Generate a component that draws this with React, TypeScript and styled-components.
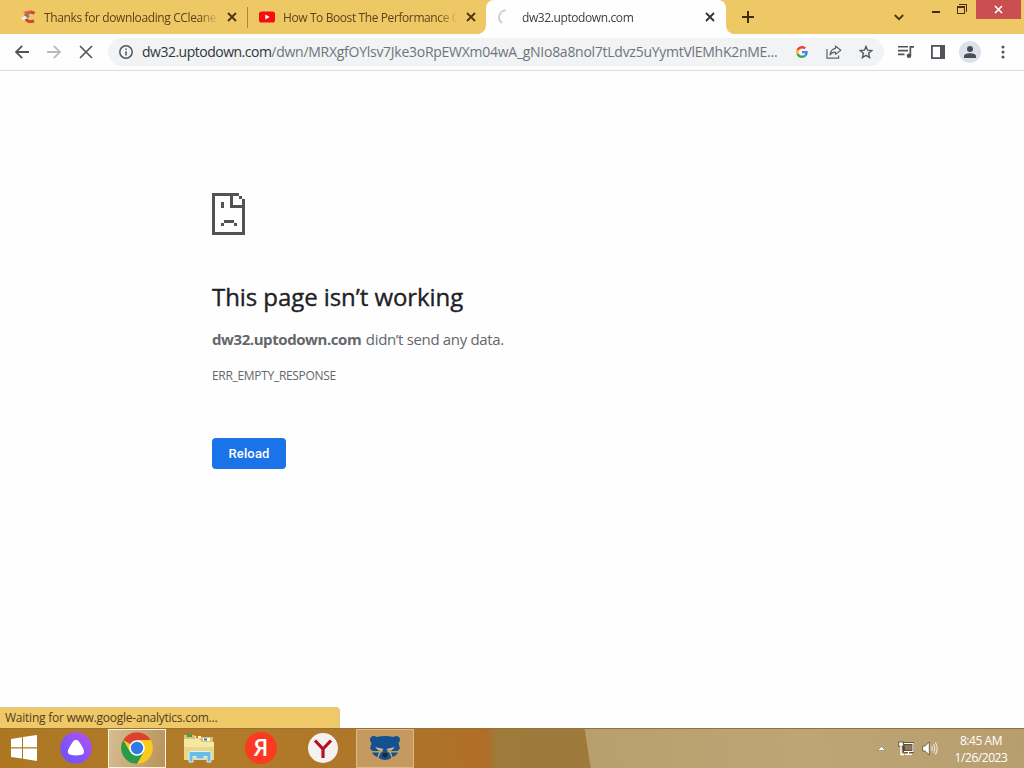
import React from "react";
import styled, { createGlobalStyle, css } from "styled-components";

const tabs = [
    { title: "Thanks for downloading CCleane", icon: "ccleaner", spacing: -0.38 },
    { title: "How To Boost The Performance C", icon: "youtube", spacing: -0.4 },
    { title: "dw32.uptodown.com", icon: "spinner", spacing: -0.4, active: true }
];

function TabIcon({ name }: { name: string }) {
    if (name === "ccleaner") {
        return (
            <svg width="16" height="16" viewBox="0 0 16 16">
                <path d="M14.5 4.5 C11.5 2 6.5 3 5.5 7.5 C5 11.5 9 13.5 14 12" fill="none" stroke="#cf4a2c" strokeWidth="3" />
                <path d="M3 3 L9 1.5 L11 3 L6 5.5 Z" fill="#e2673c" />
                <path d="M5 7 L8 4.5 L9.5 7.5 L7 9.5 Z" fill="#5f7fae" />
                <path d="M0.5 9.5 L5 6.5 L7.5 9 L3.5 11.5 Z" fill="#f6e8dc" />
            </svg>
        );
    }
    if (name === "youtube") {
        return (
            <svg width="16" height="16" viewBox="0 0 16 16">
                <rect x="0" y="2.5" width="16" height="11" rx="2.6" fill="#f80d0d" />
                <path d="M6.3 5.6 L10.7 8 L6.3 10.4 Z" fill="#fff" />
            </svg>
        );
    }
    return (
        <svg width="16" height="16" viewBox="0 0 16 16">
            <path d="M8 1.3 A7 7 0 0 0 4 14" fill="none" stroke="#c9cde2" strokeWidth="1.8" />
        </svg>
    );
}

function Cross({ size, color, weight }: { size: number; color: string; weight: number }) {
    return (
        <svg width={size} height={size} viewBox={`0 0 ${size} ${size}`}>
            <path d={`M1 1 L${size - 1} ${size - 1} M${size - 1} 1 L1 ${size - 1}`} stroke={color} strokeWidth={weight} />
        </svg>
    );
}

function SadFile() {
    return (
        <svg width="33" height="42" viewBox="0 0 33 42" shapeRendering="crispEdges" fill="#535353">
            <path d="M0 0 H27 V3 H21 V12 H33 V42 H0 Z M3 3 V39 H30 V15 H18 V3 Z" fillRule="evenodd" />
            <path d="M27 3 H30 V6 H27 Z M30 6 H33 V12 H30 Z" />
            <path d="M9 9 H12 V15 H9 Z M12 27 H22 V30 H12 Z M9 30 H12 V33 H9 Z M22 30 H25 V33 H22 Z" />
        </svg>
    );
}

function GoogleIcon() {
    return (
        <svg width="12" height="12" viewBox="0 0 48 48">
            <path fill="#EA4335" d="M24 9.5c3.54 0 6.71 1.22 9.21 3.6l6.85-6.85C35.9 2.38 30.47 0 24 0 14.62 0 6.51 5.38 2.56 13.22l7.98 6.19C12.43 13.72 17.74 9.5 24 9.5z" />
            <path fill="#4285F4" d="M46.98 24.55c0-1.57-.15-3.09-.38-4.55H24v9.02h12.94c-.58 2.96-2.26 5.48-4.78 7.18l7.73 6c4.51-4.18 7.09-10.36 7.09-17.65z" />
            <path fill="#FBBC05" d="M10.53 28.59c-.48-1.45-.76-2.99-.76-4.59s.27-3.14.76-4.59l-7.98-6.19C.92 16.46 0 20.12 0 24c0 3.88.92 7.54 2.56 10.78l7.97-6.19z" />
            <path fill="#34A853" d="M24 48c6.48 0 11.93-2.13 15.89-5.81l-7.73-6c-2.15 1.45-4.92 2.3-8.16 2.3-6.26 0-11.57-4.22-13.47-9.91l-7.98 6.19C6.51 42.62 14.62 48 24 48z" />
        </svg>
    );
}

function App() {
    return (
        <Screen>
            <GlobalStyle />
            <TabStrip>
                {tabs.map((tab) => (
                    <Tab key={tab.title} $active={tab.active}>
                        <TabIcon name={tab.icon} />
                        <TabTitle $spacing={tab.spacing} $active={tab.active}>{tab.title}</TabTitle>
                        <Cross size={10} color={tab.active ? "#333" : "#4d3317"} weight={1.8} />
                    </Tab>
                ))}
                <NewTab>
                    <svg width="12" height="12" viewBox="0 0 12 12">
                        <path d="M6 0 V12 M0 6 H12" stroke="#3d2c12" strokeWidth="2" />
                    </svg>
                </NewTab>
                <TabSearch>
                    <svg width="10" height="7" viewBox="0 0 10 7">
                        <path d="M0.8 1 L5 5.2 L9.2 1" fill="none" stroke="#4a3312" strokeWidth="1.8" />
                    </svg>
                </TabSearch>
                <WindowButtons>
                    <svg width="8" height="20" viewBox="0 0 8 20">
                        <rect y="11" width="8" height="2" fill="#4a2a17" />
                    </svg>
                    <svg width="10" height="20" viewBox="0 0 10 20" shapeRendering="crispEdges" fill="#4a2f14">
                        <path d="M0 6 H8 V14 H0 Z M1 8 V13 H7 V8 Z" fillRule="evenodd" />
                        <path d="M2 4 H10 V12 H9 V5 H2 Z" />
                    </svg>
                    <CloseWindow>
                        <Cross size={9} color="#fff" weight={1.7} />
                    </CloseWindow>
                </WindowButtons>
            </TabStrip>

            <Toolbar>
                <NavButtons>
                    <svg width="14" height="14" viewBox="0 0 14 14" fill="none" stroke="#505357" strokeWidth="1.8">
                        <path d="M14 7 H1.2 M7.2 0.8 L1 7 L7.2 13.2" />
                    </svg>
                    <svg width="14" height="14" viewBox="0 0 14 14" fill="none" stroke="#b9babc" strokeWidth="1.8">
                        <path d="M0 7 H12.8 M6.8 0.8 L13 7 L6.8 13.2" />
                    </svg>
                    <Cross size={14} color="#505357" weight={1.6} />
                </NavButtons>
                <AddressBar>
                    <svg width="14" height="14" viewBox="0 0 14 14">
                        <circle cx="7" cy="7" r="6.2" fill="none" stroke="#55585c" strokeWidth="1.5" />
                        <path d="M7 6.2 V10.5 M7 3.4 V5" stroke="#55585c" strokeWidth="1.5" />
                    </svg>
                    <Url>
                        <Domain>dw32.uptodown.com</Domain>
                        <UrlPath>/dwn/MRXgfOYlsv7Jke3oRpEWXm04wA_gNIo8a8nol7tLdvz5uYymtVlEMhK2nME...</UrlPath>
                    </Url>
                    <GoogleIcon />
                    <svg width="16" height="14" viewBox="0 0 16 14" fill="none" stroke="#5f6368" strokeWidth="1.2">
                        <path d="M1 4 V13.2 H12.6 V10.5" />
                        <path d="M9.5 1 L14.8 5.2 L9.5 9.4 V7.2 C6.8 7.1 5.2 8 4 10 C4.4 6.5 6.2 3.9 9.5 3.4 Z" strokeLinejoin="round" />
                    </svg>
                    <svg width="14" height="14" viewBox="0 0 14 14" fill="none" stroke="#55585c" strokeWidth="1.4">
                        <path d="M7 1.4 L8.6 5.2 L12.8 5.6 L9.6 8.3 L10.6 12.5 L7 10.3 L3.4 12.5 L4.4 8.3 L1.2 5.6 L5.4 5.2 Z" />
                    </svg>
                </AddressBar>
                <ToolbarIcons>
                    <svg width="16" height="14" viewBox="0 0 16 14" fill="#505357">
                        <path d="M0 1 H10 V2.6 H0 Z M0 4.8 H10 V6.4 H0 Z M0 8.6 H6.5 V10.2 H0 Z" />
                        <path d="M11.5 1 H16 V2.8 H13.2 V10.5 H11.5 Z" />
                        <circle cx="11" cy="10.8" r="2.3" />
                    </svg>
                    <svg width="14" height="14" viewBox="0 0 14 14">
                        <rect x="0.9" y="0.9" width="12.2" height="12.2" fill="none" stroke="#505357" strokeWidth="1.8" />
                        <rect x="9" y="1" width="4" height="12" fill="#505357" />
                    </svg>
                    <Avatar>
                        <svg width="12" height="12" viewBox="0 0 12 12" fill="#484e58">
                            <circle cx="6" cy="3" r="3" />
                            <path d="M0 12 V10.2 C0 8 3.5 7.2 6 7.2 S12 8 12 10.2 V12 Z" />
                        </svg>
                    </Avatar>
                    <svg width="4" height="14" viewBox="0 0 4 14" fill="#505357">
                        <circle cx="2" cy="2" r="1.5" />
                        <circle cx="2" cy="7" r="1.5" />
                        <circle cx="2" cy="12" r="1.5" />
                    </svg>
                </ToolbarIcons>
            </Toolbar>

            <ErrorPage>
                <SadFile />
                <Heading>This page isn’t working</Heading>
                <Message>
                    <strong>dw32.uptodown.com</strong> <span>didn’t send any data.</span>
                </Message>
                <ErrorCode>ERR_EMPTY_RESPONSE</ErrorCode>
                <ReloadButton>Reload</ReloadButton>
            </ErrorPage>

            <StatusBubble>Waiting for www.google-analytics.com...</StatusBubble>

            <Taskbar>
                <TaskItem $width={48}>
                    <svg width="26" height="26" viewBox="0 0 26 26" fill="#fff">
                        <path d="M0 4 L11 2.3 V12.3 H0 Z M12 2.1 L26 0 V12.3 H12 Z M0 13.4 H11 V23.5 L0 22 Z M12 13.4 H26 V26 L12 23.8 Z" />
                    </svg>
                </TaskItem>
                <TaskItem $width={56}>
                    <svg width="32" height="32" viewBox="0 0 32 32">
                        <defs>
                            <linearGradient id="alice" x1="1" y1="0" x2="0" y2="1">
                                <stop offset="0" stopColor="#b451f4" />
                                <stop offset="1" stopColor="#6454fb" />
                            </linearGradient>
                        </defs>
                        <circle cx="16" cy="16" r="15.8" fill="url(#alice)" />
                        <path d="M16 8 C18.5 8 19.5 10 21.5 13.5 C23.5 17 25 19.5 23.5 21.5 C22.3 23.2 19.5 23.4 16 23.4 S9.7 23.2 8.5 21.5 C7 19.5 8.5 17 10.5 13.5 C12.5 10 13.5 8 16 8 Z" fill="#fff" />
                    </svg>
                </TaskItem>
                <TaskItem $width={58} $offset={4} $state="active">
                    <svg width="32" height="32" viewBox="0 0 32 32">
                        <circle cx="16" cy="16" r="15.8" fill="#f9cb1d" />
                        <path d="M16 16 L2.3 8.1 A15.8 15.8 0 0 1 29.7 8.1 H16 Z" fill="#db4030" />
                        <path d="M2.3 8.1 A15.8 15.8 0 0 0 16 31.8 L22.8 20 L9.2 20 Z" fill="#29994b" />
                        <circle cx="16" cy="16" r="7.8" fill="#fff" />
                        <circle cx="16" cy="16" r="6.2" fill="#3079e6" />
                    </svg>
                </TaskItem>
                <TaskItem $width={65}>
                    <svg width="32" height="30" viewBox="0 0 32 30">
                        <path d="M1 2 H11 L13 4 H30 V10 H1 Z" fill="#d9c36d" />
                        <path d="M4 1.5 H9 V4 H4 Z" fill="#37a052" />
                        <path d="M12 3 H18 V5.5 H12 Z" fill="#fff4d0" />
                        <path d="M13 3.2 H15 V5 H13 Z" fill="#d64b30" />
                        <path d="M20 5 H27 V8 H20 Z" fill="#fff" />
                        <path d="M21 5.4 H24 V7.5 H21 Z" fill="#2b76b8" />
                        <path d="M1 6 H16 L19 9 H31 V27 H1 Z" fill="#f5e8a3" />
                        <path d="M1 14 H31 V27 H1 Z" fill="#e9d789" />
                        <path d="M6 29 V20 Q6 18.5 8 18.5 H26 Q28 18.5 28 20 V29 H24 V23.5 H21 V26 H13 V23.5 H10 V29 Z" fill="#68bce6" stroke="#d9f2fb" strokeWidth="1" />
                    </svg>
                </TaskItem>
                <TaskItem $width={60}>
                    <YandexDisc>Я</YandexDisc>
                </TaskItem>
                <TaskItem $width={64}>
                    <svg width="30" height="30" viewBox="0 0 30 30">
                        <circle cx="15" cy="15" r="15" fill="#f4f1ef" />
                        <path d="M7 7.5 L15 16 L23 7.5 M15 15 V25" fill="none" stroke="#b80f25" strokeWidth="3.2" />
                    </svg>
                </TaskItem>
                <TaskItem $width={58} $offset={1} $state="open">
                    <svg width="32" height="26" viewBox="0 0 32 26">
                        <path d="M1 4.5 C1 1 5 0 7.5 2 C13 0.6 19 0.6 24.5 2 C27 0 31 1 31 4.5 C31 6.5 30 7.5 29.5 8 L31 13.5 L28.5 16 H3.5 L1 13.5 L2.5 8 C2 7.5 1 6.5 1 4.5 Z" fill="#125292" />
                        <path d="M3 17.5 H10 L8.5 22 C6 21 4 19.5 3 17.5 Z M29 17.5 H22 L23.5 22 C26 21 28 19.5 29 17.5 Z" fill="#125292" />
                        <path d="M11.5 18 L16 15 L20.5 18 L22.5 22.5 C20 25.8 12 25.8 9.5 22.5 Z" fill="#125292" />
                        <path d="M6 12 L14.5 14 L13 16 L9.5 15.6 Z M26 12 L17.5 14 L19 16 L22.5 15.6 Z" fill="#d9b88c" />
                        <path d="M13 15 L10.5 18 L9.2 22 M19 15 L21.5 18 L22.8 22" fill="none" stroke="#c9a374" strokeWidth="1" />
                        <path d="M13.5 18 H18.5 V21 L16 23 L13.5 21 Z" fill="#17283b" />
                    </svg>
                </TaskItem>
                <Tray>
                    <svg width="9" height="5" viewBox="0 0 9 5">
                        <path d="M4.5 0.5 L8.5 4.5 H0.5 Z" fill="#fff" stroke="#76634a" strokeWidth="0.5" />
                    </svg>
                    <svg width="16" height="15" viewBox="0 0 16 15">
                        <path d="M5 2.5 H15 V10.5 H6 Z" fill="#8d7958" stroke="#4f4333" strokeWidth="2.4" />
                        <path d="M6 2.5 H15 V10.5 H6 M10.5 11 V13 M7 13.5 H14" fill="none" stroke="#fff" strokeWidth="1.2" />
                        <rect x="0.7" y="1" width="4.6" height="4.2" fill="#fff" stroke="#4f4333" strokeWidth="0.8" />
                        <path d="M3 5 V13.5 H6" fill="none" stroke="#fff" strokeWidth="1.3" />
                    </svg>
                    <svg width="16" height="15" viewBox="0 0 16 15">
                        <path d="M0.7 5 H3.2 L7.3 1 V14 L3.2 10 H0.7 Z" fill="#fff" stroke="#5b4b36" strokeWidth="0.8" />
                        <path d="M9.5 5 Q11 7.5 9.5 10 M11.5 3.2 Q14 7.5 11.5 11.8 M13.4 1.5 Q17 7.5 13.4 13.5" fill="none" stroke="#f4ead8" strokeWidth="1.1" />
                    </svg>
                    <Clock>
                        <span>8:45 AM</span>
                        <span>1/26/2023</span>
                    </Clock>
                </Tray>
            </Taskbar>
        </Screen>
    );
}

export default App;

const GlobalStyle = createGlobalStyle`
    * {
        box-sizing: border-box;
    }

    body {
        margin: 0;
        overflow: hidden;
        font-family: "Open Sans", "Noto Sans", sans-serif;
    }

    svg {
        display: block;
        flex: none;
    }
`;

const Screen = styled.div`
    display: flex;
    flex-direction: column;
    width: 1024px;
    height: 768px;
    background: #fefefe;
`;

const TabStrip = styled.div`
    display: flex;
    height: 34px;
    padding-left: 8px;
    background: #efc866;
`;

const Tab = styled.div<{ $active?: boolean }>`
    display: flex;
    align-items: center;
    width: 239px;
    padding: 0 10px 0 12px;

    & + & {
        padding-left: 11px;
        border-left: 1px solid #a98740;
        border-image: linear-gradient(transparent 8px, #a98740 8px, #a98740 27px, transparent 27px) 1;
    }

    ${(props) => props.$active && css`
        && {
            position: relative;
            width: 240px;
            padding: 0 11px 0 12px;
            border: 0;
            border-radius: 8px 8px 0 0;
            background: #fefefe;
        }

        &::before,
        &::after {
            content: "";
            position: absolute;
            bottom: 0;
            width: 8px;
            height: 8px;
        }

        &::before {
            left: -8px;
            background: radial-gradient(circle at 0 0, transparent 7.5px, #fefefe 8px);
        }

        &::after {
            right: -8px;
            background: radial-gradient(circle at 100% 0, transparent 7.5px, #fefefe 8px);
        }
    `}
`;

const TabTitle = styled.span<{ $spacing: number; $active?: boolean }>`
    flex: 1;
    margin: 0 6px 0 8px;
    white-space: nowrap;
    font-size: 12px;
    letter-spacing: ${(props) => props.$spacing}px;
    color: ${(props) => (props.$active ? "#3c4043" : "#5b431c")};
    mask-image: linear-gradient(to right, #000 calc(100% - 22px), transparent calc(100% - 2px));
`;

const NewTab = styled.div`
    display: flex;
    align-items: center;
    margin-left: 16px;
`;

const TabSearch = styled.div`
    display: flex;
    align-items: center;
    margin-left: auto;
`;

const WindowButtons = styled.div`
    display: flex;
    align-items: flex-start;
    gap: 17px;
    margin-left: 28px;
`;

const CloseWindow = styled.div`
    display: flex;
    align-items: center;
    justify-content: center;
    width: 45px;
    height: 19px;
    margin: 0 3px 0 -8px;
    background: #c94f50;
`;

const Toolbar = styled.div`
    display: flex;
    align-items: center;
    height: 37px;
    padding: 0 19px 0 15px;
    border-bottom: 1px solid #dcdddf;
    background: #fefefe;
`;

const NavButtons = styled.div`
    display: flex;
    align-items: center;
    gap: 18px;
    width: 93px;
`;

const AddressBar = styled.div`
    display: flex;
    align-items: center;
    width: 776px;
    height: 28px;
    padding: 0 11px;
    border-radius: 14px;
    background: #f1f3f4;

    svg + svg {
        margin-left: 18px;
    }

    svg:last-child {
        margin-left: 17px;
    }
`;

const Url = styled.div`
    display: flex;
    flex: 1;
    margin-left: 9px;
    white-space: nowrap;
    font-size: 14px;
    line-height: 20px;
`;

const Domain = styled.span`
    letter-spacing: -0.5px;
    color: #33363a;
`;

const UrlPath = styled.span`
    letter-spacing: -0.27px;
    color: #70747a;
`;

const ToolbarIcons = styled.div`
    display: flex;
    align-items: center;
    justify-content: space-between;
    flex: 1;
    margin-left: 14px;
`;

const Avatar = styled.div`
    display: flex;
    align-items: center;
    justify-content: center;
    width: 22px;
    height: 22px;
    margin: 0 3px 0 -3px;
    border-radius: 50%;
    background: #dde1e9;
`;

const ErrorPage = styled.main`
    display: flex;
    flex: 1;
    flex-direction: column;
    align-items: flex-start;
    padding: 122px 0 0 212px;
`;

const Heading = styled.h1`
    margin: 46px 0 0;
    white-space: nowrap;
    font-size: 24px;
    font-weight: 500;
    line-height: 32px;
    letter-spacing: -0.07px;
    color: #202124;
    -webkit-text-stroke: 0.35px #202124;
`;

const Message = styled.p`
    margin: 14px 0 0;
    font-size: 15px;
    line-height: 24px;
    letter-spacing: -0.33px;
    color: #64676b;

    strong {
        margin-right: 1px;
        letter-spacing: -0.42px;
    }
`;

const ErrorCode = styled.div`
    margin-top: 15px;
    font-size: 12px;
    line-height: 20px;
    letter-spacing: -0.31px;
    color: #64676b;
`;

const ReloadButton = styled.button`
    width: 74px;
    height: 31px;
    margin-top: 52px;
    padding: 0;
    border: 0;
    border-radius: 4px;
    background: #1a73e8;
    color: #fff;
    font-family: Roboto, sans-serif;
    font-size: 13px;
    font-weight: 500;
    letter-spacing: 0.15px;
`;

const StatusBubble = styled.div`
    width: 340px;
    height: 21px;
    padding-left: 5px;
    border-top: 1px solid #dfc88f;
    border-right: 1px solid #dfc88f;
    border-radius: 0 4px 0 0;
    background: #efc867;
    font-size: 12px;
    line-height: 20px;
    letter-spacing: -0.24px;
    color: #52401d;
`;

const Taskbar = styled.div`
    display: flex;
    height: 40px;
    border-top: 1px solid #96713a;
    background:
        linear-gradient(81deg, transparent 583px, #b99f6d 584px, #bda576 800px, #b89e6e),
        linear-gradient(90deg, #ad7722 0, #b17c2a 220px, #ad7428 420px, #b16d27 486px, #9c7b3b 498px, #9e7a3b 600px);
`;

const TaskItem = styled.div<{ $width: number; $offset?: number; $state?: string }>`
    display: flex;
    align-items: center;
    justify-content: center;
    width: ${(props) => props.$width}px;
    height: 39px;
    margin-left: ${(props) => props.$offset || 0}px;
    padding-bottom: 1px;

    ${(props) => props.$state && css`
        border: 1px solid ${props.$state === "active" ? "#fff3d9" : "#ddb983"};
        background: ${props.$state === "active" ? "linear-gradient(100deg, #d6bd92, #b9935a)" : "#c69961"};
    `}
`;

const YandexDisc = styled.div`
    width: 32px;
    height: 32px;
    border-radius: 50%;
    background: #fb3a21;
    color: #fff;
    font-family: "Open Sans", sans-serif;
    font-size: 23px;
    font-weight: 600;
    line-height: 31px;
    text-align: center;
`;

const Tray = styled.div`
    display: flex;
    align-items: center;
    gap: 8px;
    margin-left: auto;
    padding-right: 16px;

    svg:first-child {
        margin-right: 4px;
    }
`;

const Clock = styled.div`
    display: flex;
    flex-direction: column;
    align-items: center;
    width: 54px;
    margin-left: 8px;
    font-size: 12px;
    line-height: 17px;
    letter-spacing: -0.45px;
    color: #fff;
`;
